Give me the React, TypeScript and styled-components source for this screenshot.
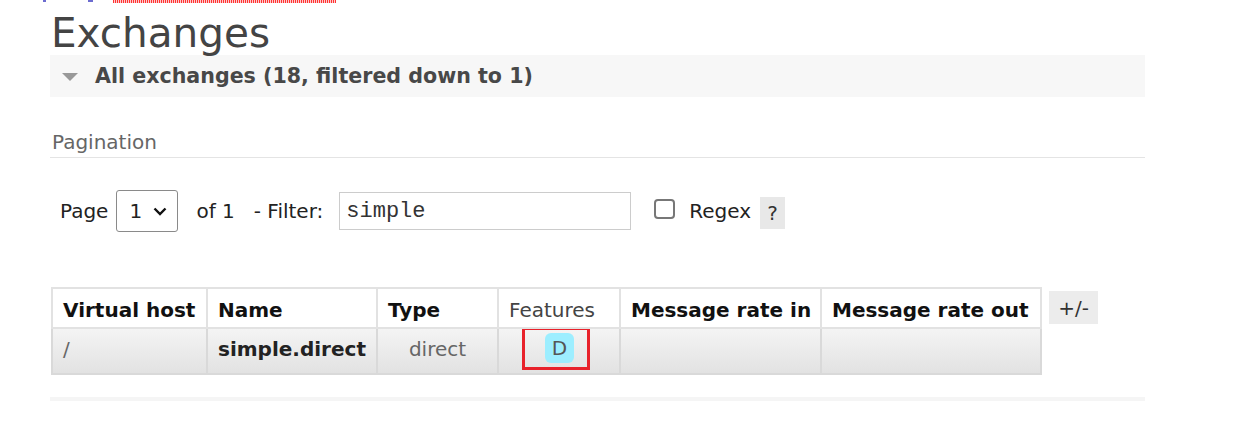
import React from 'react'
import styled, { createGlobalStyle } from 'styled-components'

const GlobalStyle = createGlobalStyle`
  body {
    margin: 0;
    background: #fff;
    font-family: "DejaVu Sans", Verdana, sans-serif;
    color: #484848;
  }
`

const Page = styled.div`
  width: 1233px;
  height: 430px;
  overflow: hidden;
  padding-left: 50px;
  box-sizing: border-box;
`

const TopStrip = styled.div`
  display: flex;
  align-items: flex-start;
  height: 3px;
`

const Tick = styled.span<{ $w: number; $ml: number }>`
  display: block;
  width: ${({ $w }) => $w}px;
  margin-left: ${({ $ml }) => $ml}px;
  height: 2px;
  background: #6c6cd0;
`

const Squiggle = styled.span`
  display: block;
  width: 223px;
  margin-left: 20px;
  height: 3px;
  background: repeating-linear-gradient(90deg, #f33 0 1px, #fcc 1px 2px);
`

const Title = styled.h1`
  margin: 7px 0 0 1px;
  font-size: 40.5px;
  font-weight: normal;
  line-height: 46px;
  height: 45px;
  color: #444;
`

const Content = styled.div`
  width: 1095px;
`

const SectionBar = styled.div`
  display: flex;
  align-items: center;
  height: 42px;
  background: #f7f7f7;
  padding-left: 12px;
  gap: 17px;
  font-weight: bold;
  font-size: 20.6px;
  color: #484848;
`

const Triangle = styled.span`
  width: 0;
  height: 0;
  border-left: 8px solid transparent;
  border-right: 8px solid transparent;
  border-top: 8px solid #999;
  margin-top: 2px;
`

const SubHeading = styled.div`
  margin-top: 33px;
  padding: 0 0 3px 2px;
  font-size: 20px;
  line-height: 24px;
  color: #666;
  border-bottom: 1px solid #e4e4e4;
`

const PagerRow = styled.div`
  display: flex;
  align-items: center;
  height: 42px;
  margin-top: 32px;
  padding-left: 10px;
  font-size: 20px;
  color: #222;
`

const Label = styled.span<{ $ml?: number }>`
  margin-left: ${({ $ml }) => $ml ?? 0}px;
`

const SelectBox = styled.div`
  display: flex;
  align-items: center;
  justify-content: space-between;
  box-sizing: border-box;
  width: 62px;
  height: 42px;
  margin-left: 8px;
  padding: 0 10px 0 12px;
  border: 1px solid #8a8a8a;
  border-radius: 3px;
  background: #fff;
`

const FilterInput = styled.div`
  box-sizing: border-box;
  width: 292px;
  height: 38px;
  margin-left: 16px;
  padding: 6px 0 0 6px;
  border: 1px solid #ccc;
  font-family: "Liberation Mono", "Courier New", monospace;
  font-size: 22px;
  color: #333;
`

const CheckBox = styled.span`
  box-sizing: border-box;
  width: 21px;
  height: 20px;
  margin-left: 23px;
  border: 2px solid #777;
  border-radius: 4px;
  margin-top: -4px;
`

const HelpButton = styled.span`
  display: flex;
  align-items: center;
  justify-content: center;
  width: 25px;
  height: 32px;
  margin-left: 9px;
  margin-top: 3px;
  background: #e8e8e8;
  color: #333;
`

const TableRow = styled.div`
  display: flex;
  align-items: flex-start;
  margin-top: 55px;
  margin-left: 1px;
`

const Table = styled.table`
  border-collapse: collapse;
  table-layout: fixed;
  width: 989px;
  flex-shrink: 0;
  font-size: 20px;
`

const Th = styled.th<{ $w: number; $light?: boolean }>`
  box-sizing: border-box;
  width: ${({ $w }) => $w}px;
  height: 40px;
  padding: 3px 10px 0;
  text-align: left;
  white-space: nowrap;
  font-weight: ${({ $light }) => ($light ? 'normal' : 'bold')};
  color: ${({ $light }) => ($light ? '#444' : '#111')};
  border: 2px solid #e2e2e2;
  background: #fff;
`

const Td = styled.td<{ $center?: boolean; $bold?: boolean }>`
  box-sizing: border-box;
  height: 46px;
  padding: 0 10px 4px;
  text-align: ${({ $center }) => ($center ? 'center' : 'left')};
  font-weight: ${({ $bold }) => ($bold ? 'bold' : 'normal')};
  color: ${({ $bold }) => ($bold ? '#222' : '#666')};
  border: 2px solid #d9d9d9;
  background: linear-gradient(#f4f4f4, #e2e2e2);
  white-space: nowrap;
`

const FeatureCell = styled(Td)`
  vertical-align: top;
  padding: 0 0 0 23px;
  text-align: left;
`

const Highlight = styled.span`
  display: flex;
  align-items: center;
  box-sizing: border-box;
  width: 68px;
  height: 43px;
  margin-top: -2px;
  padding: 0 0 2px 20px;
  border: 3px solid #e8222b;
`

const Badge = styled.span`
  display: inline-flex;
  align-items: center;
  justify-content: center;
  width: 29px;
  height: 30px;
  border-radius: 6px;
  background: #9deeff;
  color: #555;
  font-size: 20px;
`

const ColumnToggle = styled.span`
  display: flex;
  align-items: center;
  justify-content: center;
  flex-shrink: 0;
  white-space: nowrap;
  width: 49px;
  height: 33px;
  margin-left: 7px;
  margin-top: 4px;
  background: #ececec;
  color: #333;
  font-size: 20px;
`

const FooterRule = styled.div`
  height: 4px;
  margin-top: 22px;
  background: #f5f5f5;
`

const Chevron = () => (
  <svg width="14" height="9" viewBox="0 0 14 9">
    <path d="M1.5 1.5 L7 7 L12.5 1.5" fill="none" stroke="#111" strokeWidth="2.4" />
  </svg>
)

const columns: { label: string; w: number; light?: boolean }[] = [
  { label: 'Virtual host', w: 155 },
  { label: 'Name', w: 170 },
  { label: 'Type', w: 121 },
  { label: 'Features', w: 122, light: true },
  { label: 'Message rate in', w: 201 },
  { label: 'Message rate out', w: 220 },
]

const App: React.FC = () => (
  <>
    <GlobalStyle />
    <Page>
      <TopStrip>
        <Tick $w={3} $ml={-7} />
        <Tick $w={5} $ml={42} />
        <Squiggle />
      </TopStrip>
      <Title>Exchanges</Title>
      <Content>
        <SectionBar>
          <Triangle />
          <span>All exchanges (18, filtered down to 1)</span>
        </SectionBar>
        <SubHeading>Pagination</SubHeading>
        <PagerRow>
          <Label>Page</Label>
          <SelectBox>
            <span>1</span>
            <Chevron />
          </SelectBox>
          <Label $ml={18}>of 1</Label>
          <Label $ml={19}>- Filter:</Label>
          <FilterInput>simple</FilterInput>
          <CheckBox />
          <Label $ml={14}>Regex</Label>
          <HelpButton>?</HelpButton>
        </PagerRow>
        <TableRow>
          <Table>
            <thead>
              <tr>
                {columns.map((c) => (
                  <Th key={c.label} $w={c.w} $light={c.light}>
                    {c.label}
                  </Th>
                ))}
              </tr>
            </thead>
            <tbody>
              <tr>
                <Td>/</Td>
                <Td $bold>simple.direct</Td>
                <Td $center>direct</Td>
                <FeatureCell>
                  <Highlight>
                    <Badge>D</Badge>
                  </Highlight>
                </FeatureCell>
                <Td />
                <Td />
              </tr>
            </tbody>
          </Table>
          <ColumnToggle>+/-</ColumnToggle>
        </TableRow>
        <FooterRule />
      </Content>
    </Page>
  </>
)

export default App
